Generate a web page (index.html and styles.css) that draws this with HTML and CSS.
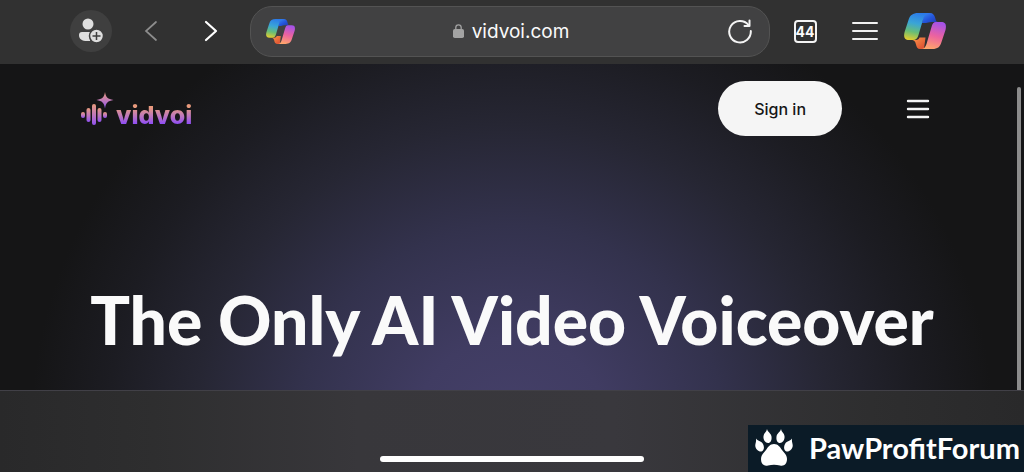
FILE: index.html
```
<!DOCTYPE html>
<html lang="en">
<head>
<meta charset="utf-8">
<meta name="viewport" content="width=device-width, initial-scale=1">
<title>vidvoi.com</title>
<link rel="stylesheet" href="styles.css">
</head>
<body>
<svg class="defs" aria-hidden="true">
  <defs>
    <linearGradient id="cp-left" x1=".6" y1="0" x2=".4" y2="1">
      <stop offset="0" stop-color="#2b7bea"/><stop offset=".4" stop-color="#3aa5d6"/><stop offset=".72" stop-color="#68bd76"/><stop offset="1" stop-color="#d9cb35"/>
    </linearGradient>
    <linearGradient id="cp-fold" x1="0" y1="0" x2="1" y2="1">
      <stop offset="0" stop-color="#3b8df2"/><stop offset=".5" stop-color="#2456dc"/><stop offset="1" stop-color="#2438a8"/>
    </linearGradient>
    <linearGradient id="cp-right" x1=".6" y1="0" x2=".35" y2="1">
      <stop offset="0" stop-color="#a552e8"/><stop offset=".5" stop-color="#ec639f"/><stop offset="1" stop-color="#ffa66a"/>
    </linearGradient>
    <linearGradient id="cp-tail" x1="0" y1="0" x2="1" y2="1">
      <stop offset="0" stop-color="#ff9a4a"/><stop offset="1" stop-color="#d9482f"/>
    </linearGradient>
    <linearGradient id="brand" x1="0" y1="0" x2="0" y2="1">
      <stop offset="0" stop-color="#e89a7c"/><stop offset=".55" stop-color="#bd77bd"/><stop offset="1" stop-color="#9050f0"/>
    </linearGradient>
    <symbol id="copilot" viewBox="0 0 42 38">
      <path fill="url(#cp-fold)" d="M20 1h6c3 0 4.500 2 5.200 5l.6 2c.3 1.200 1 2 2.200 2h-6c-3 0-4.500 1-6 1h-4z"/>
      <path fill="url(#cp-tail)" d="M7 28h5c2 0 3-1 3.500-2.500h6L20 37h-4c-2.500 0-3.500-2-4-4.500C11.300 29.500 10.500 28 7 28z"/>
      <path fill="url(#cp-left)" d="M14 1h11c-3 0-4.500 2-5.500 5l-5 17c-1 3.500-2.500 5-5.500 5H5c-5 0-5.500-4-4.400-8L4.500 8C6 3 9 1 14 1z"/>
      <path fill="url(#cp-right)" d="M32 10h5c5 0 5.500 3 4.500 8l-4 12c-1.500 5-4 7-9 7H17c3 0 4.500-2 5.500-5l5-17c1-3.500 2-5 4.500-5z"/>
    </symbol>
  </defs>
</svg>

<header class="toolbar">
  <button class="tool profile" aria-label="Add account">
    <svg width="26" height="26" viewBox="0 0 26 26">
      <g fill="#dedede"><circle cx="10" cy="6" r="5.500"/><path d="M4 14h11l-3 9H9c-5 0-8-2-8-6 0-2 1-3 3-3z"/></g>
      <circle cx="18.500" cy="18" r="7" fill="#dedede" stroke="#3f3f3f" stroke-width="1.500"/>
      <path d="M18.500 14v8M14.500 18h8" stroke="#3f3f3f" stroke-width="1.500"/>
    </svg>
  </button>
  <button class="tool" aria-label="Back">
    <svg width="14" height="22" viewBox="0 0 14 22" fill="none" stroke="#8d8d8d" stroke-width="1.700" stroke-linecap="round"><path d="M12 2 2 11l10 9"/></svg>
  </button>
  <button class="tool" aria-label="Forward">
    <svg width="14" height="22" viewBox="0 0 14 22" fill="none" stroke="#fff" stroke-width="2.200" stroke-linecap="round" stroke-linejoin="round"><path d="m2 2 10 9-10 9"/></svg>
  </button>
  <div class="address">
    <button class="plain" aria-label="Copilot"><svg width="29" height="27"><use href="#copilot"/></svg></button>
    <a class="site" href="#top">
      <svg width="11" height="14" viewBox="0 0 11 14"><rect y="5" width="11" height="9" rx="1.800" fill="#a3a3a3"/><path d="M2.800 6V3.500a2.700 2.700 0 0 1 5.400 0V6" fill="none" stroke="#a3a3a3" stroke-width="1.300"/></svg>
      <span>vidvoi.com</span>
    </a>
    <button class="plain" aria-label="Reload">
      <svg width="26" height="26" viewBox="0 0 26 26" fill="none" stroke="#f4f4f4" stroke-width="2" stroke-linecap="round" stroke-linejoin="round"><path d="M21.500 7A10.800 10.800 0 1 0 23.800 13"/><path d="M22.500 2.500v5.500h-5"/></svg>
    </button>
  </div>
  <button class="tool" aria-label="Tabs"><span class="tabs">44</span></button>
  <button class="tool" aria-label="Menu">
    <svg width="26" height="20" viewBox="0 0 26 20" stroke="#f0f0f0" stroke-width="2" stroke-linecap="round"><path d="M1 2h24M1 10h24M1 18h24"/></svg>
  </button>
  <button class="tool" aria-label="Open Copilot"><svg width="42" height="38"><use href="#copilot"/></svg></button>
</header>

<main class="hero" id="top">
  <nav class="nav">
    <a class="logo" href="#top">
      <svg width="34" height="34" viewBox="0 0 34 34" fill="url(#brand)" aria-hidden="true">
        <rect x="1" y="20" width="4" height="6" rx="2"/><rect x="6.500" y="16" width="4" height="14" rx="2"/><rect x="12" y="12" width="4" height="21" rx="2"/><rect x="17.500" y="16" width="4" height="14" rx="2"/><rect x="23" y="20" width="4" height="6" rx="2"/>
        <path d="M25 0c1 5.500 2.700 7 8.500 8-5.800 1-7.500 2.500-8.500 8.500-1-6-2.700-7.500-8.500-8.500 5.800-1 7.500-2.500 8.500-8z"/>
      </svg>
      <span>vidvoi</span>
    </a>
    <button class="signin">Sign in</button>
    <button class="burger" aria-label="Site menu">
      <svg width="24" height="20" viewBox="0 0 24 20" stroke="#f4f4f4" stroke-width="2.400" stroke-linecap="round"><path d="M2 2h20M2 10h20M2 18h20"/></svg>
    </button>
  </nav>
  <h1>The Only AI Video Voiceover</h1>
  <div class="scrollbar"></div>
</main>

<footer class="bottom">
  <div class="home"></div>
  <a class="badge" href="#top">
    <svg width="38" height="38" viewBox="0 0 38 38" fill="#fff" aria-hidden="true">
      <path d="M19 15c-4 0-6 3-8 6-2 2.500-5 5-5 9 0 5 3 7.500 7 6.500 4-1 8-1 12 0s7-1.500 7-6.500c0-4-3-6.500-5-9-2-3-4-6-8-6z"/>
      <path d="M12 0c.5 3 4 4 4.500 7.500.5 4-1 6.500-3.500 6.500s-5-3-4.500-7C8.800 4 11.700 3 12 0zM26 0c-.5 3-4 4-4.500 7.500-.5 4 1 6.500 3.500 6.500s5-3 4.500-7C29.200 4 26.300 3 26 0z"/>
      <path d="M1 9.500c1.500 2.500 5 2 7 5.500 1.800 3.500.8 7-1.500 7.500C3.500 23 .5 20 .3 17c-.2-2.500 1.200-4 .7-7.500zM37 9.500c-1.500 2.500-5 2-7 5.500-1.800 3.500-.8 7 1.500 7.500 3 .5 6-2.500 6.200-5.500.2-2.500-1.200-4-.7-7.500z"/>
    </svg>
    <span>PawProfitForum</span>
  </a>
</footer>
</body>
</html>
```
FILE: styles.css
```
* { box-sizing: border-box; }

body {
  margin: 0;
  min-height: 100vh;
  display: flex;
  flex-direction: column;
  background: #151516;
  color: #fafafa;
  font-family: Inter, "Liberation Sans", sans-serif;
}

button {
  padding: 0;
  border: 0;
  background: none;
  color: inherit;
  font: inherit;
  cursor: pointer;
}

a { color: inherit; text-decoration: none; }
svg { display: block; }

.defs { position: absolute; width: 0; height: 0; }

/* Browser toolbar */
.toolbar {
  display: flex;
  align-items: center;
  gap: 18px;
  height: 64px;
  padding: 0 78px 2px 70px;
  background: #313131;
}

.tool {
  display: grid;
  place-items: center;
  flex: none;
  width: 42px;
  height: 42px;
}

.tool.profile { border-radius: 50%; background: #3f3f3f; }

.address {
  flex: 1;
  display: flex;
  align-items: center;
  justify-content: space-between;
  height: 51px;
  margin-right: -4px;
  padding: 0 16px 0 15px;
  border: 1px solid #535353;
  border-radius: 22px;
  background: #414142;
}

.site {
  display: flex;
  align-items: center;
  gap: 8px;
  font-size: 19px;
}

.tabs {
  display: grid;
  place-items: center;
  width: 23px;
  height: 23px;
  border: 2px solid #f4f4f4;
  border-radius: 4px;
  font-size: 14px;
  font-weight: 700;
}

/* Page */
.hero {
  position: relative;
  flex: 1;
  padding: 17px 80px 29px;
  background: radial-gradient(ellipse 47% 142% at 50% 112%, #454069 0%, #403c62 20%, #33324d 44%, #262633 66%, #1c1c22 84%, #151516 100%);
}

.nav { display: flex; align-items: center; }

.logo {
  display: flex;
  align-items: flex-end;
  gap: 2px;
  margin-right: auto;
  font-size: 25px;
  font-weight: 800;
  line-height: 22px;
}

.logo span {
  background: linear-gradient(#e89a7c 15%, #bd77bd 55%, #8f4df5 90%);
  background-clip: text;
  color: transparent;
}

.signin {
  height: 55px;
  padding: 0 36px;
  border-radius: 28px;
  background: #f5f5f5;
  color: #151516;
  font-size: 16px;
  font-weight: 500;
}

.burger { margin: 0 14px 0 64px; }

h1 {
  margin: 144px 0 0;
  text-align: center;
  white-space: nowrap;
  font-family: Lato, sans-serif;
  font-size: 66px;
  font-weight: 900;
  line-height: 80px;
}

.scrollbar {
  position: absolute;
  top: 23px;
  right: 3px;
  bottom: 0;
  width: 4px;
  border-radius: 2px 2px 0 0;
  background: #8c8c8c;
}

.bottom {
  position: relative;
  display: flex;
  justify-content: center;
  align-items: flex-end;
  height: 82px;
  padding-bottom: 10px;
  border-top: 1px solid #414047;
  background: linear-gradient(90deg, #29292a, #2e2e2f 15%, #38373b 35%, #39383d 60%, #2e2e2f 85%, #29292a);
}

.home {
  width: 264px;
  height: 6px;
  border-radius: 3px;
  background: #fff;
}

.badge {
  position: absolute;
  right: 0;
  bottom: 0;
  display: flex;
  align-items: center;
  gap: 16px;
  height: 47px;
  padding: 0 4px 2px 7px;
  background: #0b1b27;
  color: #fff;
  font-family: Lato, sans-serif;
  font-size: 29px;
  font-weight: 700;
}
```
